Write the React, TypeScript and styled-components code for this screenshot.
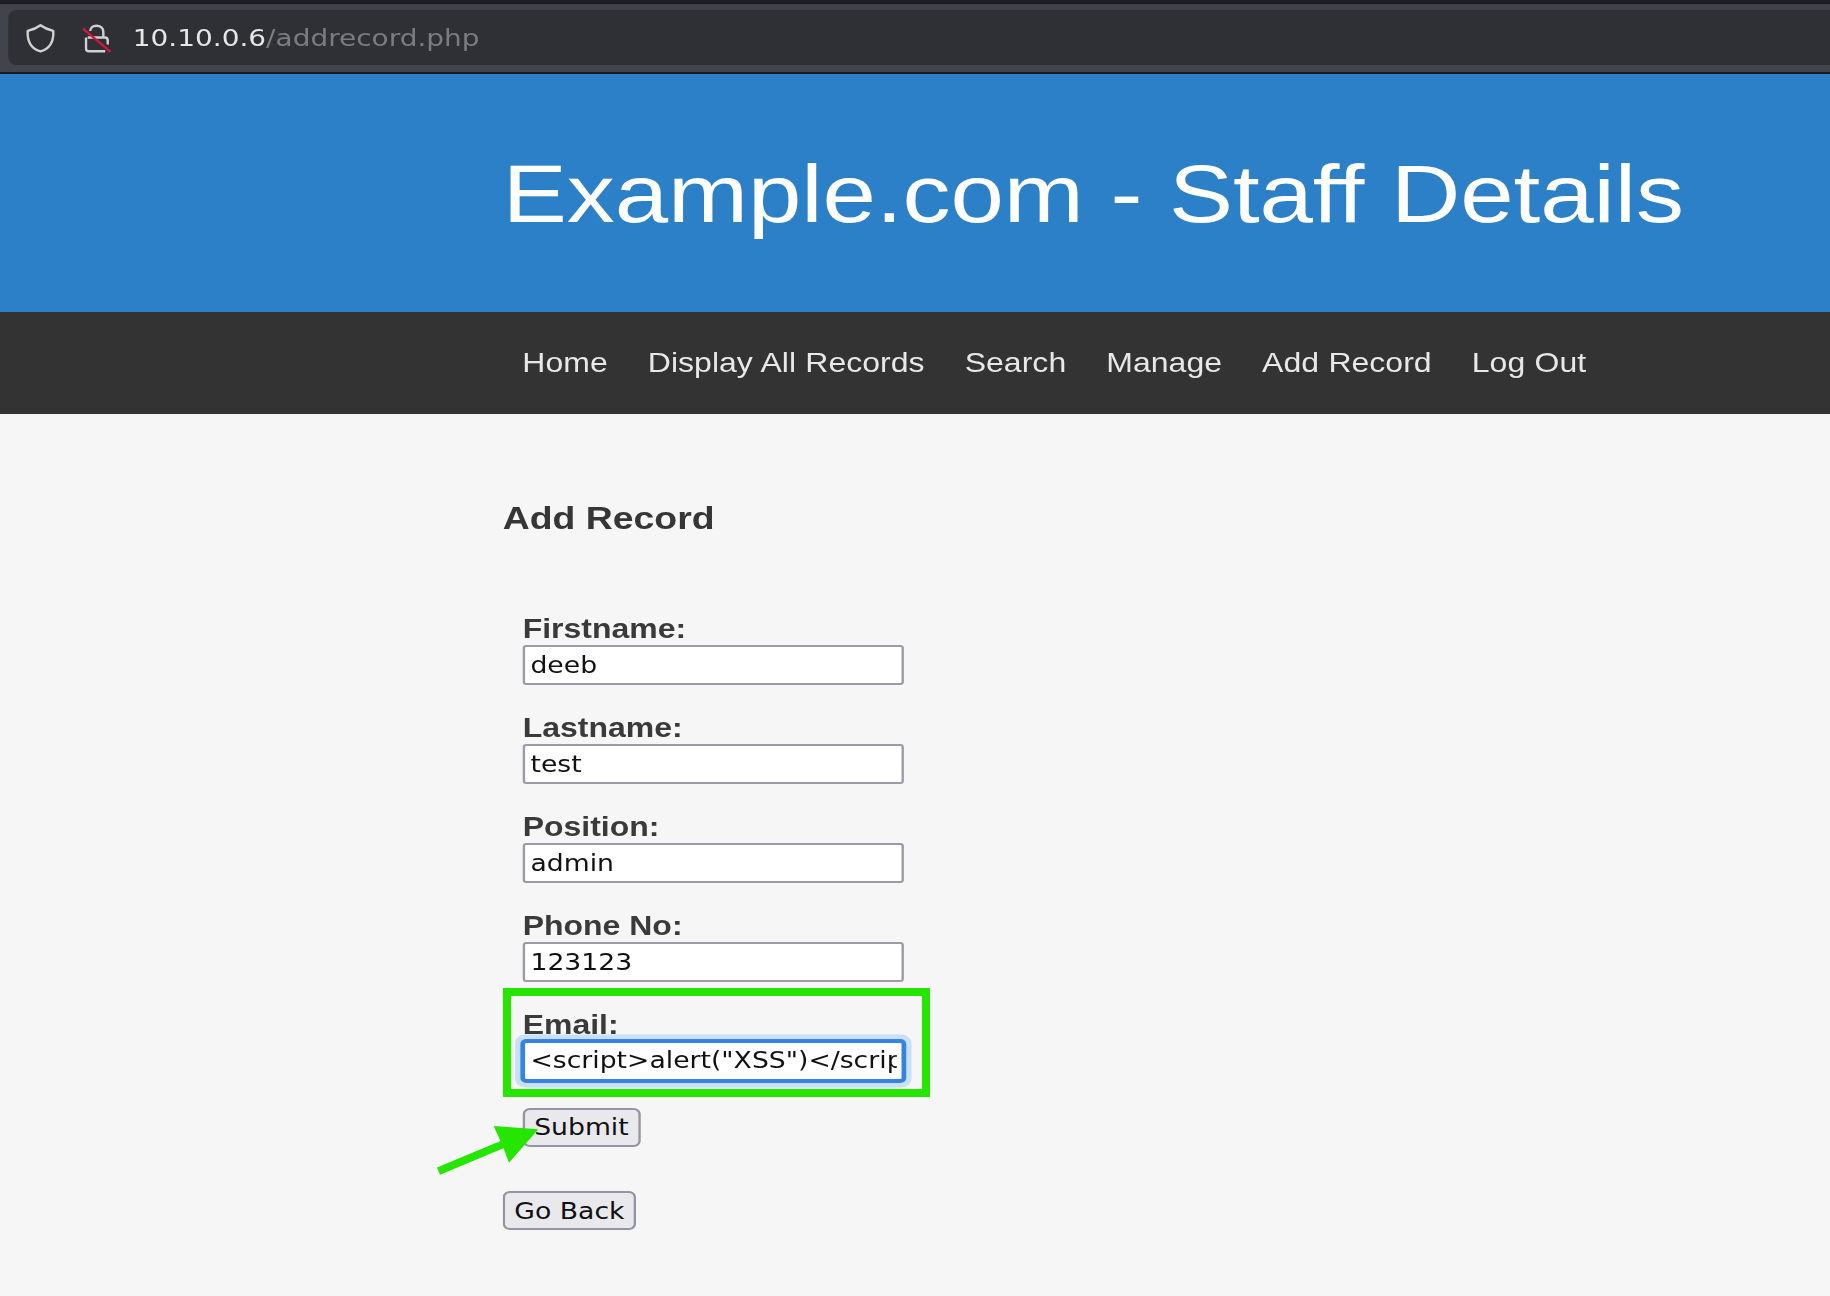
import React from 'react';
import styled, { createGlobalStyle } from 'styled-components';

// The page is shown wider than its natural proportions.
const STRETCH = 1.18;
const w = (px: number) => `${(px / STRETCH).toFixed(3)}px`;

const sans = `"Liberation Sans", Arial, sans-serif`;
const system = `"DejaVu Sans", Verdana, sans-serif`;

const GlobalStyle = createGlobalStyle`
  html, body { margin: 0; padding: 0; background: #f6f6f6; }
  body { overflow: hidden; }
  *, *::before, *::after { box-sizing: border-box; }
`;

const Frame = styled.div`
  position: relative;
  width: 1830px;
  height: 1296px;
  overflow: hidden;
  background: #f6f6f6;
`;

const Screen = styled.div`
  width: ${w(1830)};
  height: 1296px;
  transform: scaleX(${STRETCH});
  transform-origin: 0 0;
  display: flex;
  flex-direction: column;
`;

const Toolbar = styled.div`
  flex: none;
  height: 74px;
  padding: 6px 0 6px ${w(8.5)};
  border-top: 3px solid #1f1e27;
  border-bottom: 2px solid #1b1b1e;
  background: #42444b;
  box-shadow: inset 0 1px 0 #1a1a1e;
`;

const AddressField = styled.div`
  display: flex;
  align-items: center;
  height: 55px;
  margin-top: 1px;
  padding-left: ${w(15.5)};
  border-radius: ${w(8)} 0 0 ${w(8)} / 8px 0 0 8px;
  background: #2f3036;
`;

const Icon = styled.svg<{ $width: number; $gap: number }>`
  flex: none;
  width: ${(p) => w(p.$width)};
  height: 34px;
  margin-right: ${(p) => w(p.$gap)};
  fill: none;
  stroke: #d0d0d1;
  stroke-width: 2.4;
  stroke-linejoin: round;
`;

const Address = styled.span`
  font: 23.7px/32px ${system};
  color: #7c7c80;
  white-space: pre;
`;

const Host = styled.span`
  color: #e6e6e6;
`;

const Header = styled.header`
  flex: none;
  display: flex;
  align-items: center;
  height: 238.4px;
  padding: 1.6px 0 0 ${w(502.8)};
  background: #2c80c8;
`;

const Title = styled.h1`
  margin: 0;
  font: 400 81.4px/94px ${sans};
  letter-spacing: -0.06px;
  color: #fff;
  white-space: nowrap;
  font-variant-ligatures: none;
`;

const Nav = styled.nav`
  flex: none;
  display: flex;
  align-items: center;
  gap: ${w(40.1)};
  height: 102px;
  padding: 0 0 1.5px ${w(522.3)};
  background: #333;
`;

const NavLink = styled.a`
  font: 27.1px/32px ${sans};
  letter-spacing: 0.03px;
  word-spacing: 0.3px;
  color: #e8e8e8;
  white-space: nowrap;
`;

const Main = styled.main`
  display: flex;
  flex-direction: column;
  align-items: flex-start;
  padding: 85.6px 0 0 ${w(502.7)};
`;

const Heading = styled.h3`
  margin: 0 0 74.6px;
  font: 700 31.7px/37px ${sans};
  color: #363636;
`;

const Form = styled.form`
  display: flex;
  flex-direction: column;
  align-items: flex-start;
  gap: 26.1px;
  margin-bottom: 44.4px;
  padding-left: ${w(20)};
`;

const Field = styled.label`
  display: flex;
  flex-direction: column;
`;

const FieldName = styled.span`
  height: 33px;
  font: 700 27.1px/33px ${sans};
  color: #3a3a3a;
`;

const TextInput = styled.input<{ $active?: boolean }>`
  width: ${w(381.6)};
  height: 40px;
  margin: 0;
  padding: 0 ${w(5.4)};
  border: 2px solid #9a9aa8;
  border-width: 2px ${w(2.36)};
  border-radius: 3px;
  outline: none;
  background: #fff;
  font: 22.6px/30px ${system};
  color: #111;
  ${(p) =>
    p.$active &&
    `
    padding-bottom: 1px;
    border-color: #3584e4;
    box-shadow: 0 0 0 2px #3584e4, 0 0 0 6.5px #c8e1f8;
  `}
`;

const Button = styled.button<{ $width: number }>`
  width: ${(p) => w(p.$width)};
  height: 39px;
  margin: 0.5px 0 0;
  padding: 0;
  border: 2px solid #9494a2;
  border-width: 2px ${w(2.36)};
  border-radius: 6px;
  background: #e9e9ed;
  font: 22.6px/30px ${system};
  color: #111;
  white-space: nowrap;
`;

const Highlight = styled.div`
  position: absolute;
  left: 503px;
  top: 988px;
  width: 427px;
  height: 109px;
  border: 8px solid #26e600;
`;

const Arrow = styled.svg`
  position: absolute;
  left: 430px;
  top: 1120px;
  width: 120px;
  height: 60px;
  fill: #26e600;
`;

const links = ['Home', 'Display All Records', 'Search', 'Manage', 'Add Record', 'Log Out'];

const fields = [
  { name: 'Firstname:', value: 'deeb' },
  { name: 'Lastname:', value: 'test' },
  { name: 'Position:', value: 'admin' },
  { name: 'Phone No:', value: '123123' },
  { name: 'Email:', value: '<script>alert("XSS")</script>', active: true },
];

export default function App() {
  return (
    <Frame>
      <GlobalStyle />
      <Screen>
        <Toolbar>
          <AddressField>
            <Icon $width={34} $gap={22.5} viewBox="0 0 34 34" preserveAspectRatio="none">
              <path d="M16.9 4.2 C13.7 6.6 8.6 8.8 4.1 9.9 C3.6 19.4 7.2 27.7 16.9 30.4 C26.6 27.7 30.2 19.4 29.7 9.9 C25.2 8.8 20.1 6.6 16.9 4.2 Z" />
            </Icon>
            <Icon $width={34} $gap={18.3} viewBox="0 0 34 34" preserveAspectRatio="none">
              <path d="M10 10 C10 6.8 12.8 4.8 16 4.8 C20.4 4.8 23.1 7.3 23.1 11 V16.5" />
              <path d="M7.5 16.5 H24.5 Q27.5 16.5 27.5 19.5 V23.5 M5.8 16.5 V27.4 Q5.8 30.2 8.8 30.2 H25" />
              <path d="M2.7 7.6 L30.3 30.8" stroke="#d4143c" strokeWidth="2.4" />
            </Icon>
            <Address>
              <Host>10.10.0.6</Host>/addrecord.php
            </Address>
          </AddressField>
        </Toolbar>
        <Header>
          <Title>Example.com - Staff Details</Title>
        </Header>
        <Nav>
          {links.map((link) => (
            <NavLink key={link}>{link}</NavLink>
          ))}
        </Nav>
        <Main>
          <Heading>Add Record</Heading>
          <Form>
            {fields.map((field) => (
              <Field key={field.name}>
                <FieldName>{field.name}</FieldName>
                <TextInput type="text" defaultValue={field.value} $active={field.active} />
              </Field>
            ))}
            <Button type="button" $width={117.5}>Submit</Button>
          </Form>
          <Button type="button" $width={133.5}>Go Back</Button>
        </Main>
      </Screen>
      <Highlight />
      <Arrow viewBox="430 1120 120 60">
        <path d="M437 1167.4 L500.5 1141 L493.7 1126 L538.3 1129.3 L509 1162.7 L503.5 1148.3 L440 1174.7 Z" />
      </Arrow>
    </Frame>
  );
}
